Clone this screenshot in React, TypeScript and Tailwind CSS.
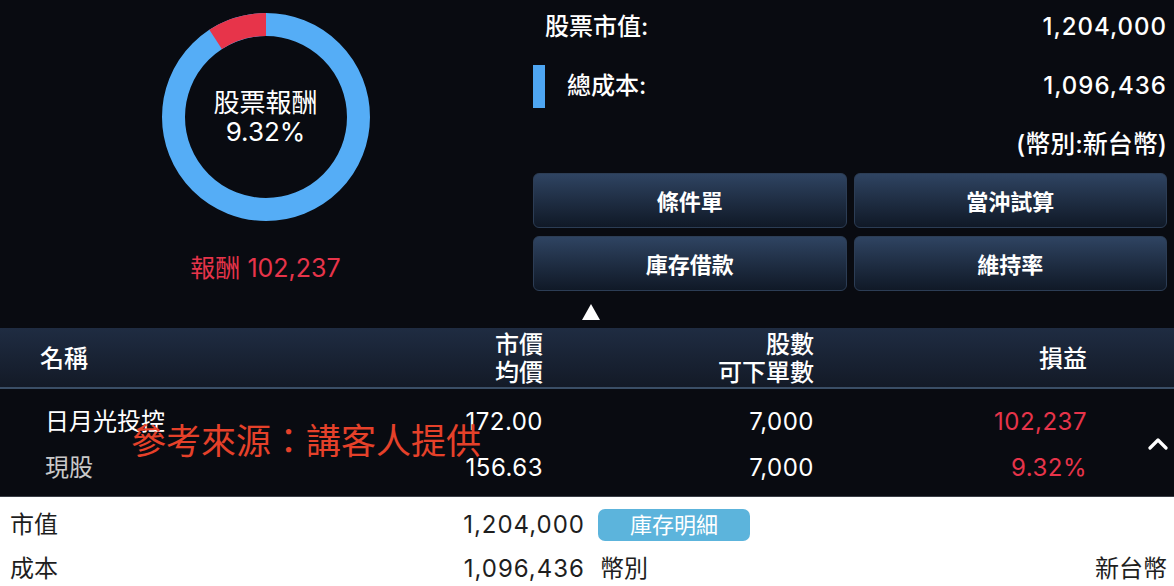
import { useState } from "react"

const buttons = ["條件單", "當沖試算", "庫存借款", "維持率"]

const Donut = () => {
    return (
        <div className="relative w-[208px] h-[208px]">
            <svg width="208" height="208" viewBox="0 0 208 208">
                <circle cx="104" cy="104" r="92.5" fill="none" stroke="#55adf6" strokeWidth="23" />
                <path d="M104 11.5 A92.5 92.5 0 0 0 53.6 26.4" fill="none" stroke="#e7344a" strokeWidth="23" />
            </svg>
            <div className="absolute inset-0 flex flex-col items-center justify-center text-white text-[26px] leading-[29px]">
                <span>股票報酬</span>
                <span>9.32%</span>
            </div>
        </div>
    )
}

const App = () => {
    const [open] = useState(true)
    return (
        <div className="w-[1174px] h-[586px] overflow-hidden bg-white font-['Inter','Noto_Sans_CJK_TC',sans-serif]">
            {/* summary */}
            <div className="h-[328px] bg-[#090b11] flex">
                <div className="w-[531px] flex flex-col items-center pt-[13px]">
                    <Donut />
                    <div className="mt-[33px] text-[25px] leading-[28px] text-[#e7344a]">報酬 102,237</div>
                </div>
                <div className="flex-1 pl-[2px] pr-[7px] text-white">
                    <div className="h-[54px] flex items-center justify-between pl-[12px] text-[24px] font-medium">
                        <span>股票市值:</span>
                        <span className="tracking-[1px]">1,204,000</span>
                    </div>
                    <div className="mt-[5px] h-[54px] flex items-center text-[24px] font-medium">
                        <span className="w-[12px] h-[43px] bg-[#4ea6f2]"></span>
                        <span className="ml-[22px]">總成本:</span>
                        <span className="ml-auto tracking-[1px]">1,096,436</span>
                    </div>
                    <div className="mt-[12px] h-[40px] flex items-center justify-end text-[25px] font-medium">(幣別:新台幣)</div>
                    <div className="mt-[8px] grid grid-cols-2 gap-x-[7px] gap-y-[8px]">
                        {buttons.map((b) => (
                            <div
                                key={b}
                                className="h-[55px] pt-[3px] rounded-[6px] border border-[#2c3d55] bg-linear-to-b from-[#2f4462] to-[#101927] flex items-center justify-center text-[22px] font-semibold"
                            >
                                {b}
                            </div>
                        ))}
                    </div>
                    <div className="mt-[13px] pl-[49px]">
                        <svg width="18" height="16" viewBox="0 0 18 16">
                            <polygon points="9,0 18,16 0,16" fill="#ffffff" />
                        </svg>
                    </div>
                </div>
            </div>

            {/* table header */}
            <div className="h-[61px] pt-[3px] grid grid-cols-[300px_243px_271px_273px_87px] items-center bg-linear-to-b from-[#1f2c42] to-[#131a27] border-b-2 border-[#3a4e66] text-white text-[24px] leading-[28px] font-medium">
                <div className="pl-[40px]">名稱</div>
                <div className="text-right">
                    <div>市價</div>
                    <div>均價</div>
                </div>
                <div className="text-right">
                    <div>股數</div>
                    <div>可下單數</div>
                </div>
                <div className="text-right">損益</div>
                <div></div>
            </div>

            {/* row */}
            <div className="relative h-[108px] bg-[#090b11] border-b border-[#3a3e46] grid grid-cols-[300px_243px_271px_273px_87px] text-[24px] leading-[28px]">
                <div className="pl-[45px] pt-[19px] flex flex-col gap-[18px]">
                    <span className="text-white">日月光投控</span>
                    <span className="text-[#c9c9c9]">現股</span>
                </div>
                <div className="pt-[19px] flex flex-col gap-[18px] items-end text-white tracking-[0.5px]">
                    <span>172.00</span>
                    <span>156.63</span>
                </div>
                <div className="pt-[19px] flex flex-col gap-[18px] items-end text-white tracking-[0.5px]">
                    <span>7,000</span>
                    <span>7,000</span>
                </div>
                <div className="pt-[19px] flex flex-col gap-[18px] items-end text-[#e7344a] tracking-[0.5px]">
                    <span>102,237</span>
                    <span>9.32%</span>
                </div>
                <div className="flex items-center justify-end pr-[6px]">
                    {open && (
                        <svg width="20" height="14" viewBox="0 0 20 14">
                            <polyline points="2,12 10,4 18,12" fill="none" stroke="#ffffff" strokeWidth="3.2" strokeLinecap="round" strokeLinejoin="round" />
                        </svg>
                    )}
                </div>
                <div className="absolute left-[131px] top-[30px] text-[35px] leading-[40px] text-[#e5412a] font-['Noto_Sans_CJK_TC',sans-serif]">
                    參考來源：講客人提供
                </div>
            </div>

            {/* detail */}
            <div className="pt-[6px] text-[#1e1e1e] text-[24px]">
                <div className="h-[44px] flex items-center">
                    <span className="pl-[10px] w-[300px]">市值</span>
                    <span className="w-[285px] text-right tracking-[1px]">1,204,000</span>
                    <span className="ml-[13px] w-[152px] h-[32px] rounded-[7px] bg-[#5cb4dc] text-white text-[22px] flex items-center justify-center">庫存明細</span>
                </div>
                <div className="h-[44px] flex items-center">
                    <span className="pl-[10px] w-[300px]">成本</span>
                    <span className="w-[285px] text-right tracking-[1px]">1,096,436</span>
                    <span className="ml-[15px]">幣別</span>
                    <span className="ml-auto pr-[7px]">新台幣</span>
                </div>
            </div>
        </div>
    )
}

export default App
